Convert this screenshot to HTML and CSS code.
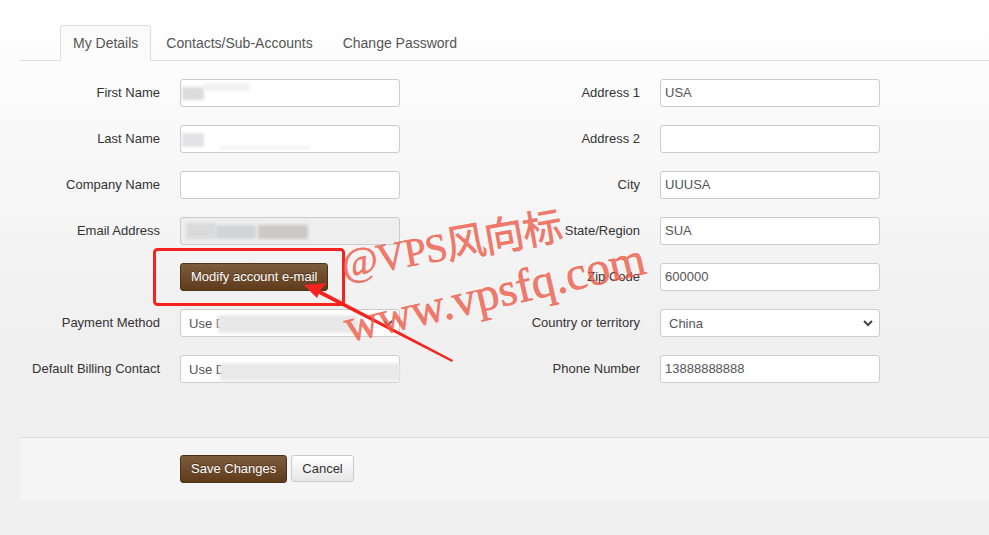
FILE: index.html
```html
<!DOCTYPE html>
<html lang="en">
<head>
    <meta charset="UTF-8">
    <meta name="viewport" content="width=device-width, initial-scale=1.0">
    <title>My Details</title>
    <link rel="stylesheet" href="styles.css">
</head>
<body>
    <div id="account">
        <ul class="tabs">
            <li class="tab active">My Details</li>
            <li class="tab">Contacts/Sub-Accounts</li>
            <li class="tab">Change Password</li>
        </ul>

        <form class="details">
            <label class="label">First Name</label>
            <div class="field">
                <input class="input" type="text">
                <span class="smudge" style="left:2px;top:8px;width:22px;height:13px;background:#dcdcdc"></span>
                <span class="smudge" style="left:24px;top:4px;width:46px;height:8px;background:#f2f2f2"></span>
            </div>
            <label class="label">Address 1</label>
            <input class="input" type="text" value="USA">

            <label class="label">Last Name</label>
            <div class="field">
                <input class="input" type="text">
                <span class="smudge" style="left:2px;top:8px;width:22px;height:14px;background:#e3e3e5"></span>
                <span class="smudge" style="left:40px;top:21px;width:90px;height:3px;background:#f0f0f0"></span>
            </div>
            <label class="label">Address 2</label>
            <input class="input" type="text">

            <label class="label">Company Name</label>
            <input class="input" type="text">
            <label class="label">City</label>
            <input class="input" type="text" value="UUUSA">

            <label class="label">Email Address</label>
            <div class="field">
                <input class="input" type="text" disabled>
                <span class="smudge" style="left:6px;top:6px;width:30px;height:16px;background:#dadada"></span>
                <span class="smudge" style="left:36px;top:8px;width:40px;height:14px;background:#d3d4d6"></span>
                <span class="smudge" style="left:78px;top:8px;width:50px;height:14px;background:#cbc9c7"></span>
            </div>
            <label class="label">State/Region</label>
            <input class="input" type="text" value="SUA">

            <span></span>
            <div><button class="btn btn-brown" type="button">Modify account e-mail</button></div>
            <label class="label">Zip Code</label>
            <input class="input" type="text" value="600000">

            <label class="label">Payment Method</label>
            <div class="field">
                <select class="input select"><option>Use Default</option></select>
                <svg class="chevron" width="10" height="7" viewBox="0 0 10 7"><path d="M1 1l4 4 4-4" fill="none" stroke="#555" stroke-width="2"/></svg>
                <span class="smudge" style="left:38px;top:6px;width:140px;height:18px;background:#e8e8e8"></span>
            </div>
            <label class="label">Country or territory</label>
            <div class="field">
                <select class="input select"><option>China</option></select>
                <svg class="chevron" width="10" height="7" viewBox="0 0 10 7"><path d="M1 1l4 4 4-4" fill="none" stroke="#444" stroke-width="2"/></svg>
            </div>

            <label class="label">Default Billing Contact</label>
            <div class="field">
                <input class="input select" type="text" value="Use D">
                <span class="smudge" style="left:40px;top:8px;width:180px;height:18px;background:#e9e9e9"></span>
            </div>
            <label class="label">Phone Number</label>
            <input class="input" type="text" value="13888888888">
        </form>

        <div class="actions">
            <button class="btn btn-brown" type="button">Save Changes</button>
            <button class="btn btn-plain" type="button">Cancel</button>
        </div>
    </div>

    <!-- annotation + watermark laid over the page -->
    <svg class="markup" width="989" height="535" viewBox="0 0 989 535">
        <rect x="154.5" y="249.5" width="189" height="55" rx="3" fill="none" stroke="#f5231e" stroke-width="3"/>
        <polygon points="452,362 453,360 318,289 315,292" fill="#f5231e"/>
        <polygon points="304,285 327,283 321,289 317,298" fill="#f5231e"/>
    </svg>
    <span class="mark mark-1">@VPS风向标</span>
    <span class="mark mark-2">www.vpsfq.com</span>
</body>
</html>
```

FILE: styles.css
```css
/* General styles */
body {
    font-family: "Liberation Sans", Arial, sans-serif;
    font-size: 13px;
    color: #333;
    margin: 0;
    padding: 0;
    min-height: 535px;
    background: linear-gradient(#ffffff 0, #f0f0f0 330px) no-repeat;
    background-color: #f0f0f0;
    overflow: hidden;
    position: relative;
}

#account {
    margin-left: 20px;
    padding-top: 25px;
}

/* Tabs */
.tabs {
    display: flex;
    list-style: none;
    margin: 0;
    padding: 0 0 0 40px;
    border-bottom: 1px solid #dddddd;
}

.tab {
    font-size: 14px;
    color: #555;
    line-height: 34px;
    padding: 0 14px;
    margin-bottom: -1px;
    border: 1px solid transparent;
    border-radius: 4px 4px 0 0;
}

.tab.active {
    padding: 0 12px;
    border-color: #dddddd;
    border-bottom-color: #fbfbfb;
    background: #fbfbfb;
}

/* Form grid */
.details {
    display: grid;
    grid-template-columns: 140px 220px 220px 220px;
    grid-auto-rows: 28px;
    column-gap: 20px;
    row-gap: 18px;
    padding-top: 18px;
    margin: 0;
}

.label {
    text-align: right;
    line-height: 27px;
    white-space: nowrap;
}

.field {
    position: relative;
}

.input {
    box-sizing: border-box;
    width: 220px;
    height: 28px;
    margin: 0;
    padding: 0 4px 1px;
    border: 1px solid #cccccc;
    border-radius: 3px;
    background: #fff;
    font-family: inherit;
    font-size: 13px;
    color: #555;
    outline: none;
}

.input:disabled {
    background: #eeeeee;
}

.select {
    -webkit-appearance: none;
    appearance: none;
    padding: 0 8px;
}

.chevron {
    position: absolute;
    right: 7px;
    top: 11px;
}

.smudge {
    position: absolute;
    filter: blur(1.5px);
}

/* Buttons */
.btn {
    height: 28px;
    padding: 0 10px 1px;
    border-radius: 3px;
    font-family: inherit;
    font-size: 13px;
    cursor: pointer;
}

.btn-brown {
    color: #fff;
    border: 1px solid #4e3217;
    background: linear-gradient(#7d5c3e, #5e3b1b);
    text-shadow: 0 -1px 0 rgba(0, 0, 0, 0.35);
}

.btn-plain {
    color: #333;
    border: 1px solid #cccccc;
    background: linear-gradient(#ffffff, #e6e6e6);
    height: 27px;
}

/* Footer bar */
.actions {
    display: flex;
    gap: 4px;
    margin-top: 54px;
    padding: 17px 0 18px 160px;
    background: #f5f5f5;
    border-top: 1px solid #dddddd;
}

/* Annotation overlay */
.markup {
    position: absolute;
    left: 0;
    top: 0;
    pointer-events: none;
}

.mark {
    position: absolute;
    font-family: "Liberation Serif", "Noto Sans CJK SC", serif;
    color: rgba(238, 90, 72, 0.8);
    -webkit-text-stroke: 0.6px rgba(238, 90, 72, 0.8);
    white-space: nowrap;
    transform-origin: 0 100%;
    pointer-events: none;
}

.mark-1 {
    left: 345px;
    top: 245px;
    font-size: 40px;
    line-height: 40px;
    letter-spacing: -1px;
    transform: rotate(-10deg);
}

.mark-2 {
    left: 350px;
    top: 303px;
    font-size: 47px;
    line-height: 47px;
    transform: rotate(-13deg);
}
```
